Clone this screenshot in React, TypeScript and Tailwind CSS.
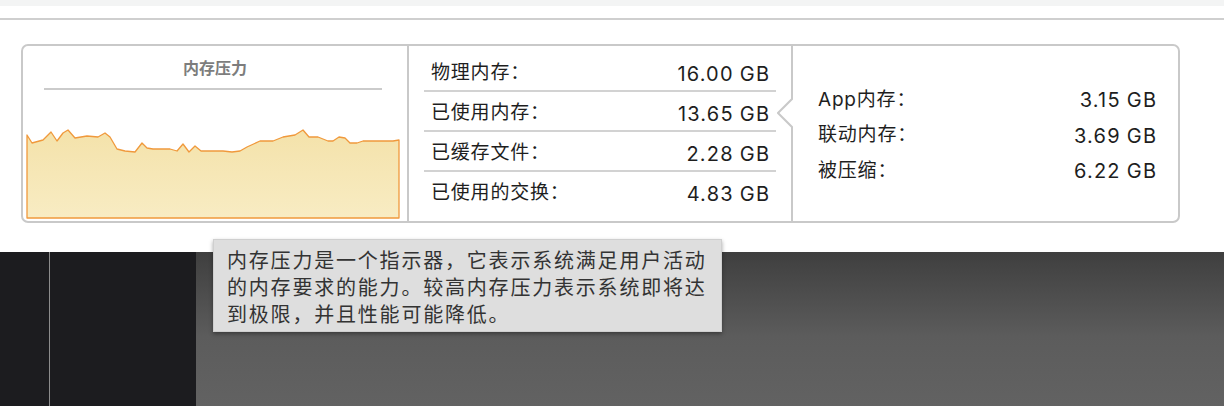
import React from "react";

const FONT = "font-['Inter','Noto_Sans_CJK_SC',sans-serif]";

const pts: [number, number][] = [
  [1, 8], [6, 16], [17, 13], [25, 5], [31, 14], [37, 6], [42, 3], [49, 11], [61, 9], [72, 10],
  [79, 6], [84, 10], [91, 22], [99, 24], [109, 25], [116, 16], [121, 21], [127, 22], [144, 22],
  [151, 24], [157, 17], [163, 25], [169, 19], [175, 24], [197, 24], [206, 25], [214, 24],
  [221, 20], [234, 14], [247, 14], [257, 10], [269, 8], [277, 3], [283, 10], [292, 10],
  [302, 14], [307, 14], [313, 10], [319, 11], [324, 16], [331, 16], [337, 14], [367, 14], [373, 13],
];

function Chart() {
  const line = pts.map((p) => p.join(",")).join(" ");
  const poly = `${line} 373,91 1,91`;
  return (
    <svg width="374" height="92" viewBox="0 0 374 92" className="block">
      <defs>
        <linearGradient id="g" x1="0" y1="0" x2="0" y2="1">
          <stop offset="0" stopColor="#f4e2aa" />
          <stop offset="1" stopColor="#f8ecc3" />
        </linearGradient>
      </defs>
      <polygon points={poly} fill="url(#g)" stroke="#f0993c" strokeWidth="1.3" strokeLinejoin="round" />
    </svg>
  );
}

const mid = [
  ["物理内存：", "16.00", "GB"],
  ["已使用内存：", "13.65", "GB"],
  ["已缓存文件：", "2.28", "GB"],
  ["已使用的交换：", "4.83", "GB"],
];
const right = [
  ["App内存：", "3.15", "GB"],
  ["联动内存：", "3.69", "GB"],
  ["被压缩：", "6.22", "GB"],
];

function Val({ n, u }: { n: string; u: string }) {
  return (
    <span className="flex items-baseline gap-[6px] text-[20px] tracking-[1.2px] mr-[-1.2px]">
      <span>{n}</span>
      <span>{u}</span>
    </span>
  );
}

export default function App() {
  return (
    <div className={`relative w-[1224px] h-[406px] overflow-hidden bg-white ${FONT}`}>
      <div className="h-[6px] bg-[#f3f4f4]" />
      <div className="h-[12px]" />
      <div className="h-[2px] bg-[#cfcfcf]" />
      <div className="h-[24px]" />
      <div className="ml-[21px] w-[1159px] h-[179px] border-2 border-[#c9c9c9] rounded-[7px] flex bg-white">
        {/* left */}
        <div className="w-[384px] flex flex-col">
          <div className="h-[42px] flex items-center justify-center text-[16px] font-bold text-[#7d7d7d] font-['Noto_Sans_CJK_SC',sans-serif]">
            内存压力
          </div>
          <div className="ml-[21px] mr-[25px] h-[2px] bg-[#cbcbcb]" />
          <div className="mt-auto mb-[2px] ml-[3px]">
            <Chart />
          </div>
        </div>
        <div className="w-[2px] bg-[#c9c9c9]" />
        {/* middle */}
        <div className="w-[368px] pl-[15px] pr-[1px] pt-[6px] flex flex-col">
          {mid.map(([l, n, u], i) => (
            <div key={l}>
              <div className="h-[38px] pt-[5px] px-[7px] flex items-center justify-between text-[19px] text-[#1e1e1e]">
                <span className="tracking-[0.8px]">{l}</span>
                <Val n={n} u={u} />
              </div>
              {i < 3 && <div className="h-[2px] bg-[#d2d2d2]" />}
            </div>
          ))}
        </div>
        {/* divider with notch */}
        <div className="w-[16px]">
          <svg width="16" height="175" viewBox="0 0 16 175" className="block">
            <polyline points="15,0 15,53 1,67 15,81 15,175" fill="none" stroke="#c9c9c9" strokeWidth="2" />
          </svg>
        </div>
        {/* right */}
        <div className="flex-1 pl-[25px] pr-[22px] pt-[4px] flex flex-col justify-center">
          {right.map(([l, n, u]) => (
            <div key={l} className="h-[35.5px] flex items-center justify-between text-[19px] text-[#1e1e1e]">
              <span className="tracking-[0.8px]">{l}</span>
              <Val n={n} u={u} />
            </div>
          ))}
        </div>
      </div>
      <div className="h-[29px]" />
      <div className="h-[154px] flex">
        <div className="w-[196px] bg-[#1c1c1f] flex">
          <div className="ml-[49px] w-[1px] bg-[#8c8c8c]" />
        </div>
        <div className="flex-1 bg-gradient-to-b from-[#3f3f3f] via-[#5c5c5c] via-[55%] to-[#626262]" />
      </div>
      {/* tooltip */}
      <div className="absolute left-[213px] top-[239px] w-[509px] h-[93px] bg-[#dedede] border border-[#cfcfcf] shadow-[0_2px_4px_rgba(0,0,0,0.35)] pl-[13px] pt-[6px] text-[20px] leading-[27px] tracking-[1.8px] text-[#333333] font-['Noto_Sans_CJK_SC',sans-serif] whitespace-nowrap">
        内存压力是一个指示器，它表示系统满足用户活动
        <br />
        的内存要求的能力。较高内存压力表示系统即将达
        <br />
        到极限，并且性能可能降低。
      </div>
    </div>
  );
}
